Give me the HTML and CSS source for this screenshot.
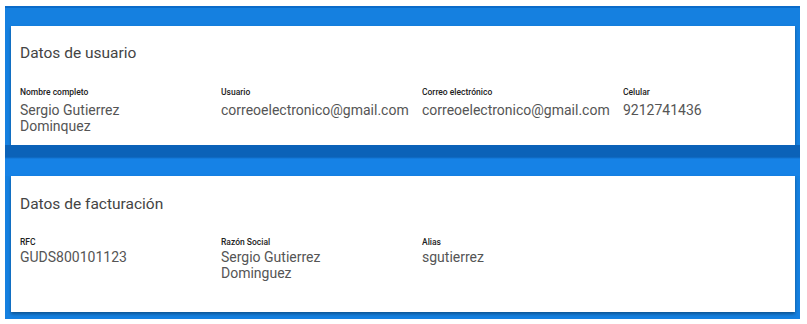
FILE: index.html
```html
<!DOCTYPE html>
<html lang="es">
<head>
  <meta charset="UTF-8">
  <meta name="viewport" content="width=device-width, initial-scale=1.0">
  <title>Perfil</title>
  <link rel="stylesheet" href="styles.css">
</head>
<body>
  <div class="frame">
    <div class="band band-first"></div>
    <div class="card">
      <h2>Datos de usuario</h2>
      <div class="fields">
        <div class="field">
          <div class="label">Nombre completo</div>
          <div class="value">Sergio Gutierrez<br>Dominquez</div>
        </div>
        <div class="field">
          <div class="label">Usuario</div>
          <div class="value">correoelectronico@gmail.com</div>
        </div>
        <div class="field">
          <div class="label">Correo electrónico</div>
          <div class="value">correoelectronico@gmail.com</div>
        </div>
        <div class="field">
          <div class="label">Celular</div>
          <div class="value">9212741436</div>
        </div>
      </div>
    </div>

    <div class="band band-second"></div>
    <div class="card card-billing">
      <h2>Datos de facturación</h2>
      <div class="fields">
        <div class="field">
          <div class="label">RFC</div>
          <div class="value">GUDS800101123</div>
        </div>
        <div class="field">
          <div class="label">Razón Social</div>
          <div class="value">Sergio Gutierrez<br>Dominguez</div>
        </div>
        <div class="field">
          <div class="label">Alias</div>
          <div class="value">sgutierrez</div>
        </div>
        <div class="field"></div>
      </div>
    </div>
  </div>
</body>
</html>
```

FILE: styles.css
```css
body {
  margin: 0;
  padding: 6px 7px 6px 5px;
  background-color: #fff;
  font-family: Roboto, 'Liberation Sans', sans-serif;
}
.frame {
  background-color: #1580e0;
  padding: 0 5px 7px 6px;
  border-top: 2px solid #0b6bc9;
}
.band {
  height: 18px;
}
.band-second {
  height: 31px;
  background: linear-gradient(#0b62b8 0, #0b62b8 12px, #1682e6 14px, #1682e6 100%);
  margin: 0 -5px 0 -6px;
}
.card {
  background-color: #fff;
  box-shadow: 0 2px 3px rgba(0, 0, 0, 0.35);
  padding: 17px 9px 12px 9px;
  height: 90px;
}
.card-billing {
  height: 106px;
  padding-top: 18px;
}
.card h2 {
  margin: 0;
  font-size: 15.5px;
  font-weight: 400;
  color: #444;
  line-height: 20px;
}
.fields {
  display: grid;
  grid-template-columns: 201px 201px 201px 1fr;
  margin-top: 24px;
}
.card-billing .fields {
  margin-top: 23px;
}
.label {
  font-size: 8.5px;
  font-weight: 500;
  color: #222;
  line-height: 10px;
}
.value {
  font-size: 14px;
  color: #555;
  line-height: 16px;
  margin-top: 5px;
}
.card-billing .value {
  margin-top: 2px;
}
```
